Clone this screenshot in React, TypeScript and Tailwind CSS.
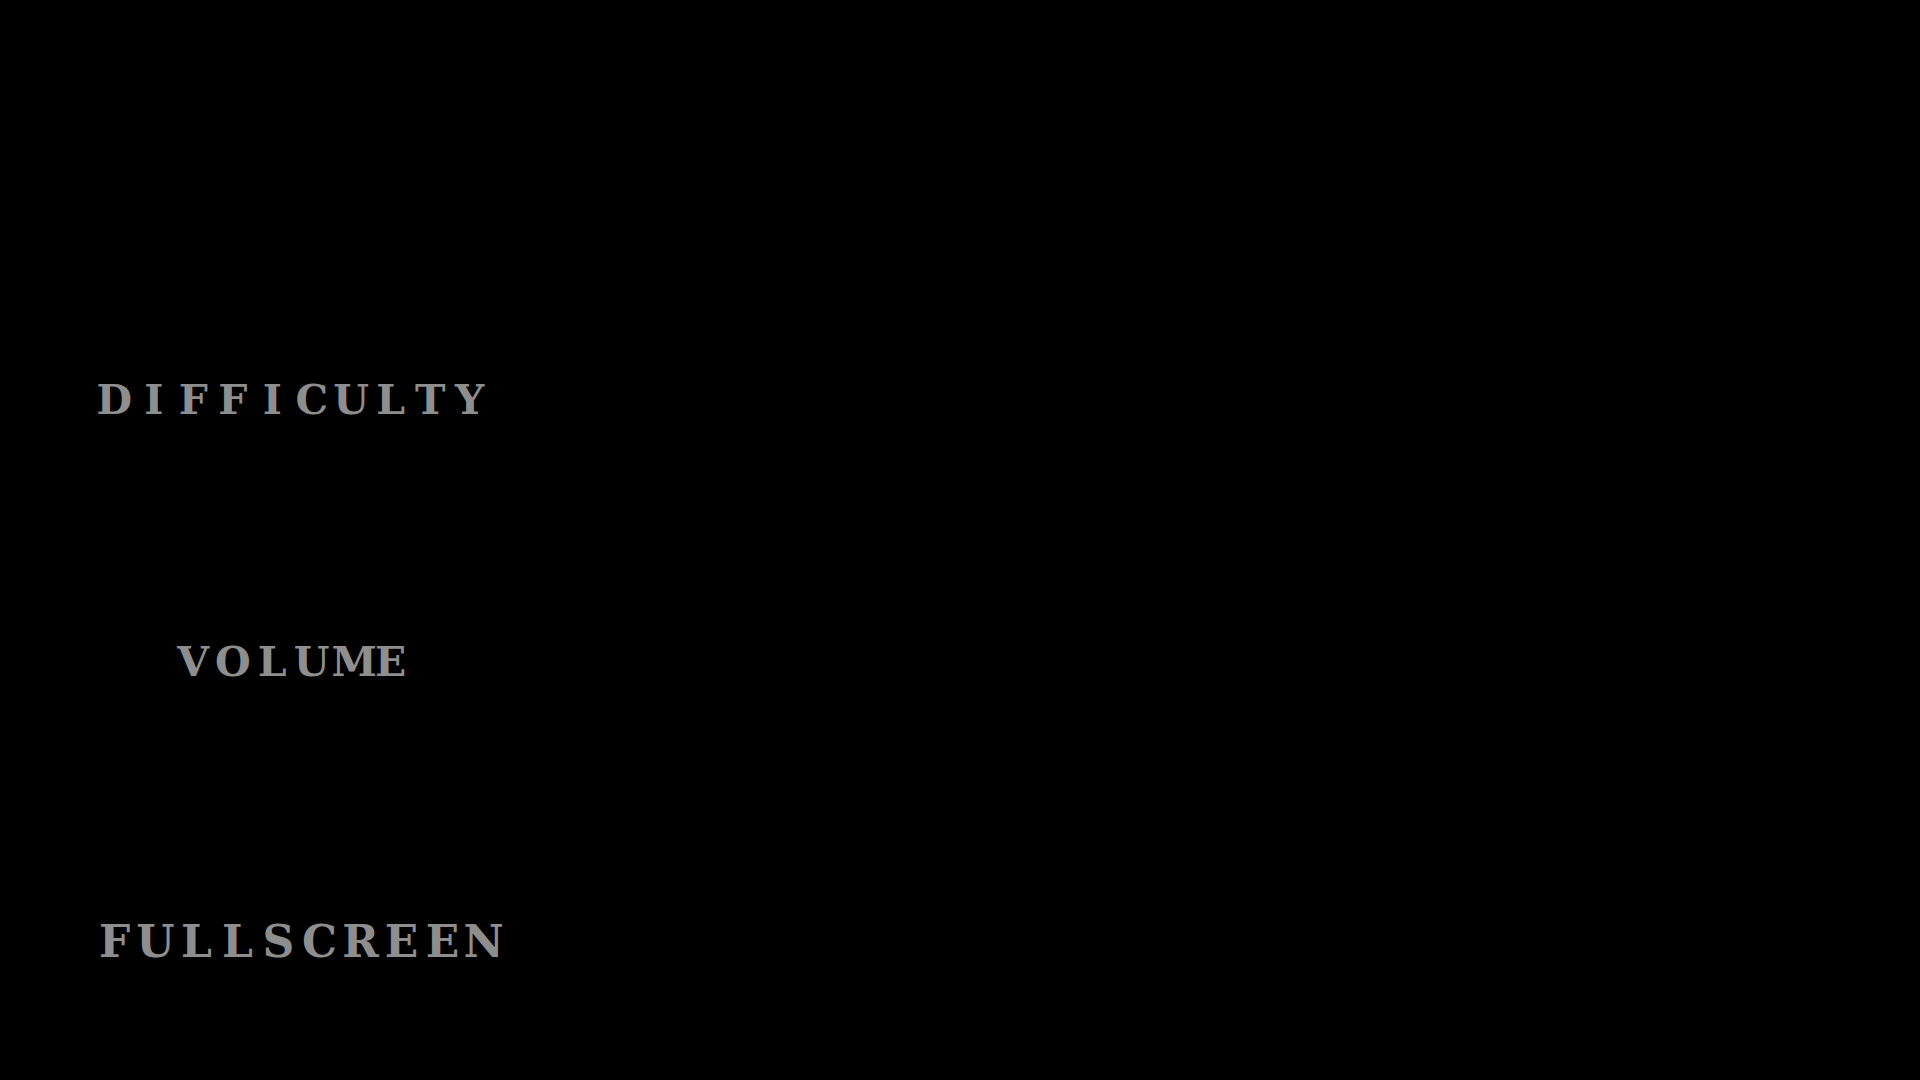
const items = [
  { label: 'DIFFICULTY', className: 'mt-[380px] text-[41px]', cell: 'w-[39.5px]' },
  { label: 'VOLUME', className: 'mt-[221px] text-[41px]', cell: 'w-[39.5px]' },
  { label: 'FULLSCREEN', className: 'mt-[237px] ml-[14px] text-[44px]', cell: 'w-[41px]' },
]

export default function App() {
  return (
    <div className="h-[1080px] w-[1920px] overflow-hidden bg-black">
      <div className="flex w-[584px] flex-col items-center">
        {items.map(({ label, className, cell }) => (
          <div
            key={label}
            className={`flex font-['DejaVu_Serif',serif] font-bold leading-none text-[#8e8e8e] ${className}`}
          >
            {label.split('').map((ch, i) => (
              <span key={i} className={`inline-block text-center ${cell}`}>
                {ch}
              </span>
            ))}
          </div>
        ))}
      </div>
    </div>
  )
}
